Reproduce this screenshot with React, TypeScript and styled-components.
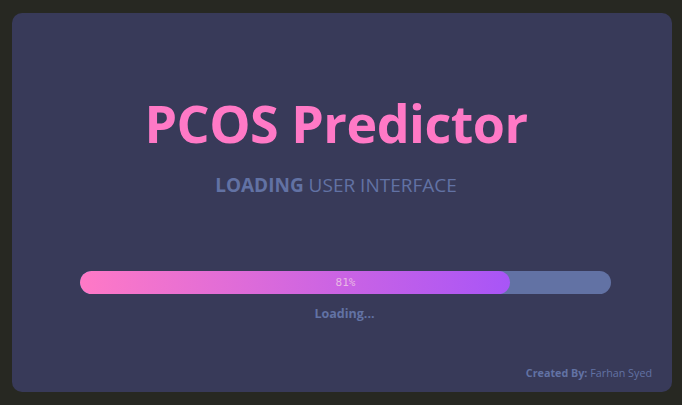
import React from "react";
import styled, { createGlobalStyle } from "styled-components";

const Global = createGlobalStyle`
  html, body { margin: 0; padding: 0; background: #272822; }
  body { font-family: "Open Sans", "Noto Sans", sans-serif; }
`;

const Page = styled.div`
  width: 682px;
  height: 405px;
  box-sizing: border-box;
  padding: 13px 10px 13px 12px;
  display: flex;
`;

const Card = styled.div`
  flex: 1;
  background: #383a59;
  border-radius: 10px;
  display: flex;
  flex-direction: column;
  align-items: center;
  padding: 74px 12px 0 0;
  box-sizing: border-box;
  position: relative;
`;

const Title = styled.h1`
  margin: 0;
  font-size: 52px;
  font-weight: 700;
  line-height: 72px;
  color: #ff79c6;
  letter-spacing: -0.5px;
`;

const Subtitle = styled.div`
  margin-top: 13px;
  font-size: 19px;
  line-height: 26px;
  color: #6272a4;
  b { font-weight: 700; }
`;

const Track = styled.div`
  margin-top: 73px;
  margin-left: 19px;
  width: 531px;
  height: 23px;
  border-radius: 12px;
  background: #6272a4;
  position: relative;
  overflow: hidden;
`;

const Fill = styled.div`
  height: 100%;
  border-radius: 12px;
  background: linear-gradient(90deg, #ff79c6, #a855f7);
`;

const Percent = styled.span`
  position: absolute;
  inset: 0;
  display: flex;
  align-items: center;
  justify-content: center;
  font-family: "DejaVu Sans Mono", monospace;
  font-size: 11px;
  color: #e8b8e4;
`;

const Status = styled.div`
  margin-top: 11px;
  margin-left: 17px;
  font-size: 12.5px;
  font-weight: 700;
  color: #6272a4;
`;

const Footer = styled.div`
  position: absolute;
  right: 20px;
  bottom: 12px;
  font-size: 10.75px;
  color: #6272a4;
  b { font-weight: 700; }
`;

export default function App() {
  const progress = 81;
  return (
    <>
      <Global />
      <Page>
        <Card>
          <Title>PCOS Predictor</Title>
          <Subtitle>
            <b>LOADING</b> USER INTERFACE
          </Subtitle>
          <Track>
            <Fill style={{ width: `${progress}%` }} />
            <Percent>{progress}%</Percent>
          </Track>
          <Status>Loading...</Status>
          <Footer>
            <b>Created By:</b> Farhan Syed
          </Footer>
        </Card>
      </Page>
    </>
  );
}
